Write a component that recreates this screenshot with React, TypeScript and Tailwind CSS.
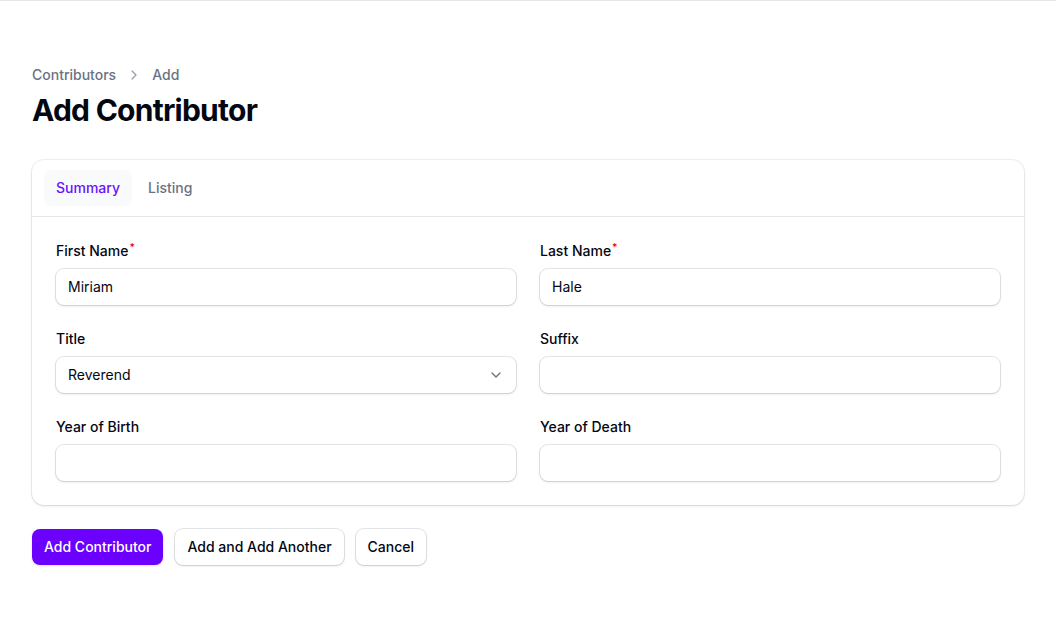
import { ChevronRight, ChevronDown } from "lucide-react";

function Field({ label, value, required }: { label: string; value?: string; required?: boolean }) {
  return (
    <div className="flex flex-col gap-y-2">
      <label className="text-sm font-medium leading-5 text-gray-950">
        {label}
        {required && <sup className="text-red-600 font-medium ml-px">*</sup>}
      </label>
      <div className="flex h-9 items-center rounded-lg bg-white shadow-sm ring-1 ring-gray-950/10">
        <input
          className="w-full bg-transparent px-3 py-1.5 text-sm text-gray-950 outline-none"
          defaultValue={value}
        />
      </div>
    </div>
  );
}

function SelectField({ label, value }: { label: string; value: string }) {
  return (
    <div className="flex flex-col gap-y-2">
      <label className="text-sm font-medium leading-5 text-gray-950">{label}</label>
      <div className="flex h-9 items-center justify-between rounded-lg bg-white pl-3 pr-3 shadow-sm ring-1 ring-gray-950/10">
        <span className="text-sm text-gray-950">{value}</span>
        <ChevronDown className="h-4 w-4 text-gray-500" strokeWidth={2} />
      </div>
    </div>
  );
}

export default function App() {
  return (
    <div className="min-h-screen bg-white border-t border-gray-200 font-['Inter',sans-serif]">
      <div className="px-8 pt-16">
        <nav className="flex items-center gap-x-2.5 text-sm font-medium text-gray-500">
          <span>Contributors</span>
          <ChevronRight className="h-4 w-4 text-gray-400" />
          <span>Add</span>
        </nav>
        <h1 className="mt-[7px] text-3xl font-bold tracking-tight text-gray-950">Add Contributor</h1>

        <div className="mt-8 rounded-xl bg-white ring-1 ring-gray-950/5 shadow-sm">
          <div className="flex gap-x-1 border-b border-gray-200 px-3 py-2.5">
            <button className="rounded-lg bg-gray-50 px-3 py-2 text-sm font-medium text-[#6b11ff]">
              Summary
            </button>
            <button className="rounded-lg px-3 py-2 text-sm font-medium text-gray-500">Listing</button>
          </div>
          <div className="grid grid-cols-2 gap-6 p-6">
            <Field label="First Name" value="Miriam" required />
            <Field label="Last Name" value="Hale" required />
            <SelectField label="Title" value="Reverend" />
            <Field label="Suffix" />
            <Field label="Year of Birth" />
            <Field label="Year of Death" />
          </div>
        </div>

        <div className="mt-6 flex gap-3">
          <button className="h-9 rounded-lg bg-[#6b00ff] px-3 text-sm font-medium text-white shadow-sm">
            Add Contributor
          </button>
          <button className="h-9 rounded-lg bg-white px-3 text-sm font-medium text-gray-950 shadow-sm ring-1 ring-gray-950/10">
            Add and Add Another
          </button>
          <button className="h-9 rounded-lg bg-white px-3 text-sm font-medium text-gray-950 shadow-sm ring-1 ring-gray-950/10">
            Cancel
          </button>
        </div>
      </div>
    </div>
  );
}
